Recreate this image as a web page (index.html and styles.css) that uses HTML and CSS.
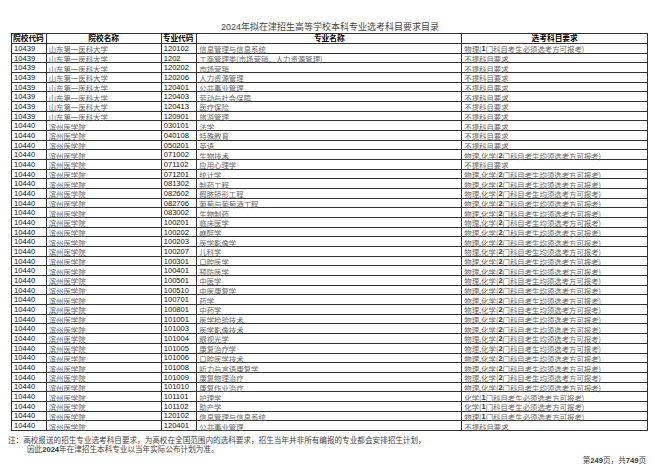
FILE: index.html
```html
<!DOCTYPE html>
<html lang="zh">
<head>
<meta charset="utf-8">
<title>2024年拟在津招生高等学校本科专业选考科目要求目录</title>
<link rel="stylesheet" href="styles.css">
</head>
<body>
<div class="page">
  <h1 class="title"><span class="num">2024</span>年拟在津招生高等学校本科专业选考科目要求目录</h1>
  <div class="list" role="table">
    <div class="row head" role="row">
      <div class="cell left" role="columnheader">院校代码</div>
      <div class="cell" role="columnheader">院校名称</div>
      <div class="cell left" role="columnheader">专业代码</div>
      <div class="cell" role="columnheader">专业名称</div>
      <div class="cell" role="columnheader">选考科目要求</div>
    </div>
    <div class="row"><div class="cell n">10439</div><div class="cell t">山东第一医科大学</div><div class="cell n">120102</div><div class="cell t">信息管理与信息系统</div><div class="cell t">物理(<b>1</b>门科目考生必须选考方可报考)</div></div>
    <div class="row"><div class="cell n">10439</div><div class="cell t">山东第一医科大学</div><div class="cell n">1202</div><div class="cell t">工商管理类(市场营销，人力资源管理)</div><div class="cell t">不提科目要求</div></div>
    <div class="row"><div class="cell n">10439</div><div class="cell t">山东第一医科大学</div><div class="cell n">120202</div><div class="cell t">市场营销</div><div class="cell t">不提科目要求</div></div>
    <div class="row"><div class="cell n">10439</div><div class="cell t">山东第一医科大学</div><div class="cell n">120206</div><div class="cell t">人力资源管理</div><div class="cell t">不提科目要求</div></div>
    <div class="row"><div class="cell n">10439</div><div class="cell t">山东第一医科大学</div><div class="cell n">120401</div><div class="cell t">公共事业管理</div><div class="cell t">不提科目要求</div></div>
    <div class="row"><div class="cell n">10439</div><div class="cell t">山东第一医科大学</div><div class="cell n">120403</div><div class="cell t">劳动与社会保障</div><div class="cell t">不提科目要求</div></div>
    <div class="row"><div class="cell n">10439</div><div class="cell t">山东第一医科大学</div><div class="cell n">120413</div><div class="cell t">医疗保险</div><div class="cell t">不提科目要求</div></div>
    <div class="row"><div class="cell n">10439</div><div class="cell t">山东第一医科大学</div><div class="cell n">120901</div><div class="cell t">旅游管理</div><div class="cell t">不提科目要求</div></div>
    <div class="row"><div class="cell n">10440</div><div class="cell t">滨州医学院</div><div class="cell n">030101</div><div class="cell t">法学</div><div class="cell t">不提科目要求</div></div>
    <div class="row"><div class="cell n">10440</div><div class="cell t">滨州医学院</div><div class="cell n">040108</div><div class="cell t">特殊教育</div><div class="cell t">不提科目要求</div></div>
    <div class="row"><div class="cell n">10440</div><div class="cell t">滨州医学院</div><div class="cell n">050201</div><div class="cell t">英语</div><div class="cell t">不提科目要求</div></div>
    <div class="row"><div class="cell n">10440</div><div class="cell t">滨州医学院</div><div class="cell n">071002</div><div class="cell t">生物技术</div><div class="cell t">物理,化学(<b>2</b>门科目考生均须选考方可报考)</div></div>
    <div class="row"><div class="cell n">10440</div><div class="cell t">滨州医学院</div><div class="cell n">071102</div><div class="cell t">应用心理学</div><div class="cell t">不提科目要求</div></div>
    <div class="row"><div class="cell n">10440</div><div class="cell t">滨州医学院</div><div class="cell n">071201</div><div class="cell t">统计学</div><div class="cell t">物理,化学(<b>2</b>门科目考生均须选考方可报考)</div></div>
    <div class="row"><div class="cell n">10440</div><div class="cell t">滨州医学院</div><div class="cell n">081302</div><div class="cell t">制药工程</div><div class="cell t">物理,化学(<b>2</b>门科目考生均须选考方可报考)</div></div>
    <div class="row"><div class="cell n">10440</div><div class="cell t">滨州医学院</div><div class="cell n">082602</div><div class="cell t">假肢矫形工程</div><div class="cell t">物理,化学(<b>2</b>门科目考生均须选考方可报考)</div></div>
    <div class="row"><div class="cell n">10440</div><div class="cell t">滨州医学院</div><div class="cell n">082706</div><div class="cell t">葡萄与葡萄酒工程</div><div class="cell t">物理,化学(<b>2</b>门科目考生均须选考方可报考)</div></div>
    <div class="row"><div class="cell n">10440</div><div class="cell t">滨州医学院</div><div class="cell n">083002</div><div class="cell t">生物制药</div><div class="cell t">物理,化学(<b>2</b>门科目考生均须选考方可报考)</div></div>
    <div class="row"><div class="cell n">10440</div><div class="cell t">滨州医学院</div><div class="cell n">100201</div><div class="cell t">临床医学</div><div class="cell t">物理,化学(<b>2</b>门科目考生均须选考方可报考)</div></div>
    <div class="row"><div class="cell n">10440</div><div class="cell t">滨州医学院</div><div class="cell n">100202</div><div class="cell t">麻醉学</div><div class="cell t">物理,化学(<b>2</b>门科目考生均须选考方可报考)</div></div>
    <div class="row"><div class="cell n">10440</div><div class="cell t">滨州医学院</div><div class="cell n">100203</div><div class="cell t">医学影像学</div><div class="cell t">物理,化学(<b>2</b>门科目考生均须选考方可报考)</div></div>
    <div class="row"><div class="cell n">10440</div><div class="cell t">滨州医学院</div><div class="cell n">100207</div><div class="cell t">儿科学</div><div class="cell t">物理,化学(<b>2</b>门科目考生均须选考方可报考)</div></div>
    <div class="row"><div class="cell n">10440</div><div class="cell t">滨州医学院</div><div class="cell n">100301</div><div class="cell t">口腔医学</div><div class="cell t">物理,化学(<b>2</b>门科目考生均须选考方可报考)</div></div>
    <div class="row"><div class="cell n">10440</div><div class="cell t">滨州医学院</div><div class="cell n">100401</div><div class="cell t">预防医学</div><div class="cell t">物理,化学(<b>2</b>门科目考生均须选考方可报考)</div></div>
    <div class="row"><div class="cell n">10440</div><div class="cell t">滨州医学院</div><div class="cell n">100501</div><div class="cell t">中医学</div><div class="cell t">物理,化学(<b>2</b>门科目考生均须选考方可报考)</div></div>
    <div class="row"><div class="cell n">10440</div><div class="cell t">滨州医学院</div><div class="cell n">100510</div><div class="cell t">中医康复学</div><div class="cell t">物理,化学(<b>2</b>门科目考生均须选考方可报考)</div></div>
    <div class="row"><div class="cell n">10440</div><div class="cell t">滨州医学院</div><div class="cell n">100701</div><div class="cell t">药学</div><div class="cell t">物理,化学(<b>2</b>门科目考生均须选考方可报考)</div></div>
    <div class="row"><div class="cell n">10440</div><div class="cell t">滨州医学院</div><div class="cell n">100801</div><div class="cell t">中药学</div><div class="cell t">物理,化学(<b>2</b>门科目考生均须选考方可报考)</div></div>
    <div class="row"><div class="cell n">10440</div><div class="cell t">滨州医学院</div><div class="cell n">101001</div><div class="cell t">医学检验技术</div><div class="cell t">物理,化学(<b>2</b>门科目考生均须选考方可报考)</div></div>
    <div class="row"><div class="cell n">10440</div><div class="cell t">滨州医学院</div><div class="cell n">101003</div><div class="cell t">医学影像技术</div><div class="cell t">物理,化学(<b>2</b>门科目考生均须选考方可报考)</div></div>
    <div class="row"><div class="cell n">10440</div><div class="cell t">滨州医学院</div><div class="cell n">101004</div><div class="cell t">眼视光学</div><div class="cell t">物理,化学(<b>2</b>门科目考生均须选考方可报考)</div></div>
    <div class="row"><div class="cell n">10440</div><div class="cell t">滨州医学院</div><div class="cell n">101005</div><div class="cell t">康复治疗学</div><div class="cell t">物理,化学(<b>2</b>门科目考生均须选考方可报考)</div></div>
    <div class="row"><div class="cell n">10440</div><div class="cell t">滨州医学院</div><div class="cell n">101006</div><div class="cell t">口腔医学技术</div><div class="cell t">物理,化学(<b>2</b>门科目考生均须选考方可报考)</div></div>
    <div class="row"><div class="cell n">10440</div><div class="cell t">滨州医学院</div><div class="cell n">101008</div><div class="cell t">听力与言语康复学</div><div class="cell t">物理,化学(<b>2</b>门科目考生均须选考方可报考)</div></div>
    <div class="row"><div class="cell n">10440</div><div class="cell t">滨州医学院</div><div class="cell n">101009</div><div class="cell t">康复物理治疗</div><div class="cell t">物理,化学(<b>2</b>门科目考生均须选考方可报考)</div></div>
    <div class="row"><div class="cell n">10440</div><div class="cell t">滨州医学院</div><div class="cell n">101010</div><div class="cell t">康复作业治疗</div><div class="cell t">物理,化学(<b>2</b>门科目考生均须选考方可报考)</div></div>
    <div class="row"><div class="cell n">10440</div><div class="cell t">滨州医学院</div><div class="cell n">101101</div><div class="cell t">护理学</div><div class="cell t">化学(<b>1</b>门科目考生必须选考方可报考)</div></div>
    <div class="row"><div class="cell n">10440</div><div class="cell t">滨州医学院</div><div class="cell n">101102</div><div class="cell t">助产学</div><div class="cell t">化学(<b>1</b>门科目考生必须选考方可报考)</div></div>
    <div class="row"><div class="cell n">10440</div><div class="cell t">滨州医学院</div><div class="cell n">120102</div><div class="cell t">信息管理与信息系统</div><div class="cell t">物理(<b>1</b>门科目考生必须选考方可报考)</div></div>
    <div class="row"><div class="cell n">10440</div><div class="cell t">滨州医学院</div><div class="cell n">120401</div><div class="cell t">公共事业管理</div><div class="cell t">不提科目要求</div></div>
  </div>
  <p class="note">注：高校报送的招生专业选考科目要求，为高校在全国范围内的选科要求，招生当年并非所有编报的专业都会安排招生计划，<br>因此<span class="num">2024</span>年在津招生本科专业以当年实际公布计划为准。</p>
  <p class="pager">第<span class="num">249</span>页，共<span class="num">749</span>页</p>
</div>
</body>
</html>
```
FILE: styles.css
```css
html, body {
  margin: 0;
  padding: 0;
  background: #ffffff;
}

.page {
  width: 660px;
  height: 466px;
  overflow: hidden;
  font-family: "Noto Sans CJK SC", "Liberation Serif", serif;
  color: #555;
}

.num {
  font-family: "Liberation Sans", "Noto Sans CJK SC", sans-serif;
}

.title {
  margin: 0;
  padding-top: 20px;
  height: 13px;
  line-height: 13px;
  font-size: 9px;
  font-weight: normal;
  text-align: center;
  color: #444;
}

.list {
  margin-left: 11px;
  width: 637px;
  box-sizing: border-box;
  border-top: 1px solid #333;
  border-left: 1px solid #333;
}

.row {
  display: grid;
  grid-template-columns: 34.7px 115px 35.6px 265px 1fr;
  height: 9.68px;
  box-sizing: border-box;
  border-bottom: 1px solid #333;
}

.row.head {
  height: 10px;
}

.cell {
  display: flex;
  align-items: center;
  min-width: 0;
  box-sizing: border-box;
  border-right: 1px solid #333;
  white-space: nowrap;
  line-height: 7px;
}

.head .cell {
  justify-content: center;
  font-family: "Liberation Sans", "Noto Sans CJK SC", sans-serif;
  font-size: 7.7px;
  font-weight: bold;
  color: #000;
}

.head .cell.left {
  justify-content: flex-start;
  padding-left: 1px;
}

.cell.n {
  font-family: "Liberation Sans", sans-serif;
  font-size: 7.6px;
  color: #111;
  padding-left: 2px;
}

.cell.t {
  font-size: 7.4px;
  color: #666;
  padding-left: 2px;
  padding-top: 1px;
}

.cell.t b {
  font-family: "Liberation Sans", sans-serif;
  font-weight: bold;
  color: #333;
}

.note {
  margin: 4px 0 0 8px;
  padding-left: 19px;
  text-indent: -19px;
  font-size: 7.6px;
  line-height: 9.5px;
  color: #444;
}

.note .num,
.pager .num {
  font-weight: bold;
  color: #333;
}

.pager {
  margin: 0;
  padding-right: 14px;
  text-align: right;
  font-size: 7.6px;
  line-height: 10px;
  color: #444;
}
```
